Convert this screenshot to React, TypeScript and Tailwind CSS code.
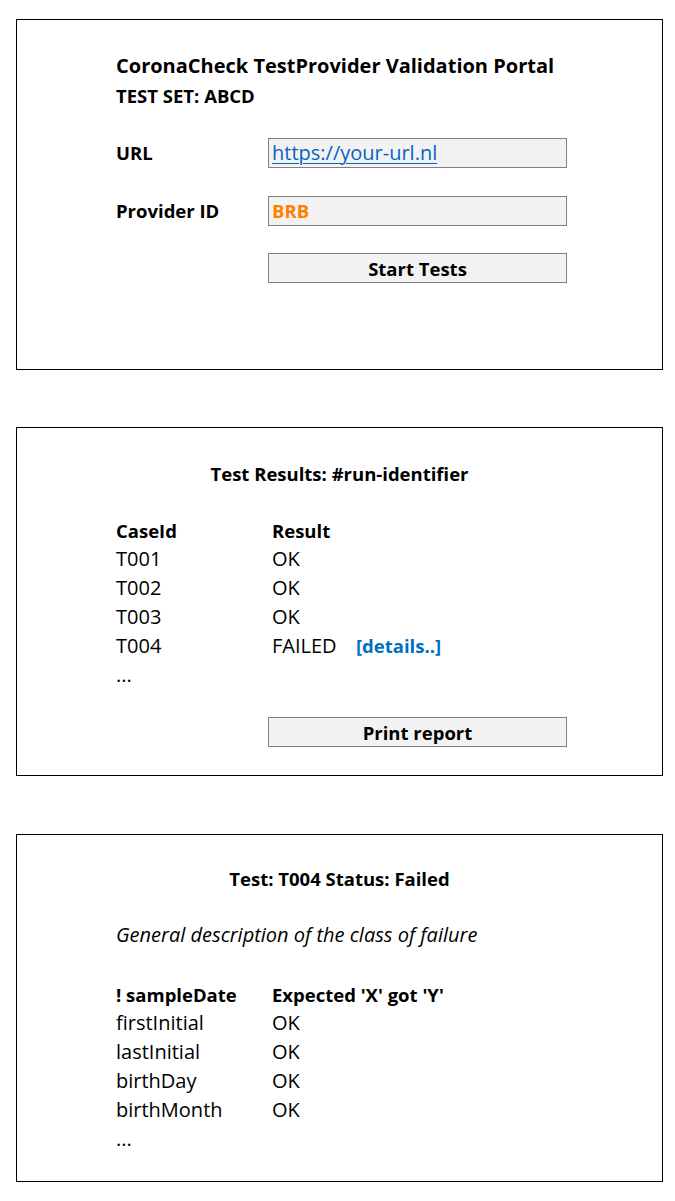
import React from "react";

const Field = ({ children }: { children: React.ReactNode }) => (
  <div className="flex h-[30px] w-[299px] items-center border border-[#808080] bg-[#f2f2f2] pl-[3px] leading-[28px]">
    {children}
  </div>
);

const Button = ({ children }: { children: React.ReactNode }) => (
  <div className="flex h-[30px] w-[299px] items-center justify-center border border-[#808080] bg-[#f2f2f2] pt-[1px] text-[18.5px] font-bold leading-[28px]">
    {children}
  </div>
);

const Row = ({ a, b, bold = false }: { a: React.ReactNode; b?: React.ReactNode; bold?: boolean }) => (
  <div className={`flex h-[29px] ${bold ? "pt-[1px] text-[18.5px] font-bold leading-[29px]" : "leading-[29px]"}`}>
    <div className="w-[156px] shrink-0">{a}</div>
    <div className="flex items-baseline">{b}</div>
  </div>
);

export default function App() {
  return (
    <div className="min-h-[1201px] bg-white pt-[19px] pl-[16px] font-['Open_Sans',sans-serif] text-[20px] text-black">
      {/* Box 1 */}
      <div className="h-[351px] w-[647px] border border-black pt-[30px] pl-[99px]">
        <div className="h-[30px] pt-[1px] text-[20px] font-bold leading-[30px]">CoronaCheck TestProvider Validation Portal</div>
        <div className="h-[29px] pt-[1px] text-[18.5px] font-bold leading-[29px]">TEST SET: ABCD</div>
        <div className="mt-[28px] flex h-[30px] items-center pt-[1px]">
          <div className="w-[152px] text-[18.5px] font-bold">URL</div>
          <Field>
            <span className="text-[#0563c1] underline decoration-1 underline-offset-[3px]">https://your-url.nl</span>
          </Field>
        </div>
        <div className="mt-[28px] flex h-[30px] items-center pt-[1px]">
          <div className="w-[152px] text-[18.5px] font-bold">Provider ID</div>
          <Field>
            <span className="text-[18.5px] font-bold text-[#ff7f00]">BRB</span>
          </Field>
        </div>
        <div className="mt-[28px] flex h-[30px] items-center">
          <div className="w-[152px]"></div>
          <Button>Start Tests</Button>
        </div>
      </div>

      {/* Box 2 */}
      <div className="mt-[57px] h-[349px] w-[647px] border border-black pt-[30px]">
        <div className="h-[29px] pt-[1px] text-center text-[18.5px] font-bold leading-[29px]">Test Results: #run-identifier</div>
        <div className="mt-[28px] pl-[99px]">
          <Row a="CaseId" b="Result" bold />
          <Row a="T001" b="OK" />
          <Row a="T002" b="OK" />
          <Row a="T003" b="OK" />
          <Row
            a="T004"
            b={
              <>
                <span className="w-[84px]">FAILED</span>
                <span className="text-[18.5px] font-bold text-[#0070c0]">[details..]</span>
              </>
            }
          />
          <Row a="..." />
          <div className="mt-[28px] flex">
            <div className="w-[152px]"></div>
            <Button>Print report</Button>
          </div>
        </div>
      </div>

      {/* Box 3 */}
      <div className="mt-[58px] h-[348px] w-[647px] border border-black pt-[28px]">
        <div className="h-[29px] pt-[1px] text-center text-[18.5px] font-bold leading-[29px]">Test: T004 Status: Failed</div>
        <div className="mt-[28px] pl-[99px]">
          <div className="h-[29px] italic leading-[29px]">General description of the class of failure</div>
          <div className="mt-[30px]">
            <Row a="! sampleDate" b="Expected 'X' got 'Y'" bold />
            <Row a="firstInitial" b="OK" />
            <Row a="lastInitial" b="OK" />
            <Row a="birthDay" b="OK" />
            <Row a="birthMonth" b="OK" />
            <Row a="..." />
          </div>
        </div>
      </div>
    </div>
  );
}
